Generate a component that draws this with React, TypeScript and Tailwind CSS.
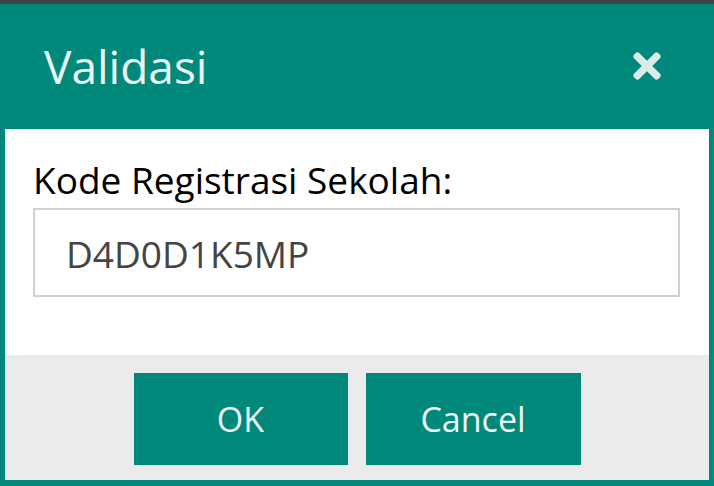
import { FaTimes } from 'react-icons/fa'

const App = () => {
  return (
    <div className="w-[714px] h-[486px] bg-[#3a4747] pt-[4px] font-['Open_Sans',sans-serif]">
      <div className="h-[482px] flex flex-col border-x-[5px] border-b-[6px] border-[#00897b] bg-white">
        <div className="h-[125px] bg-[#00897b] flex items-center justify-between pl-[39px] pr-[42px] shrink-0">
          <p className="text-[46px] text-[#eaf6f4] leading-none -mt-[2px]">Validasi</p>
          <FaTimes style={{ fontSize: '40px', color: '#dcebe8' }} className="-mt-[2px]" />
        </div>
        <div className="flex-1 bg-white px-[28px] pt-[32px]">
          <p className="text-[37px] text-black leading-none">Kode Registrasi Sekolah:</p>
          <input
            type="text"
            readOnly
            value="D4D0D1K5MP"
            className="mt-[10px] w-[647px] h-[89px] border-2 border-[#d0d0d0] pl-[31px] pt-[2px] text-[37px] text-[#444] outline-none"
          />
        </div>
        <div className="h-[125px] bg-[#ebebeb] flex justify-center items-start pt-[18px] gap-[18px] shrink-0">
          <button className="w-[214px] h-[92px] bg-[#00897b] text-[#eef7f6] text-[34px]">OK</button>
          <button className="w-[215px] h-[92px] bg-[#00897b] text-[#eef7f6] text-[34px]">Cancel</button>
        </div>
      </div>
    </div>
  )
}

export default App
